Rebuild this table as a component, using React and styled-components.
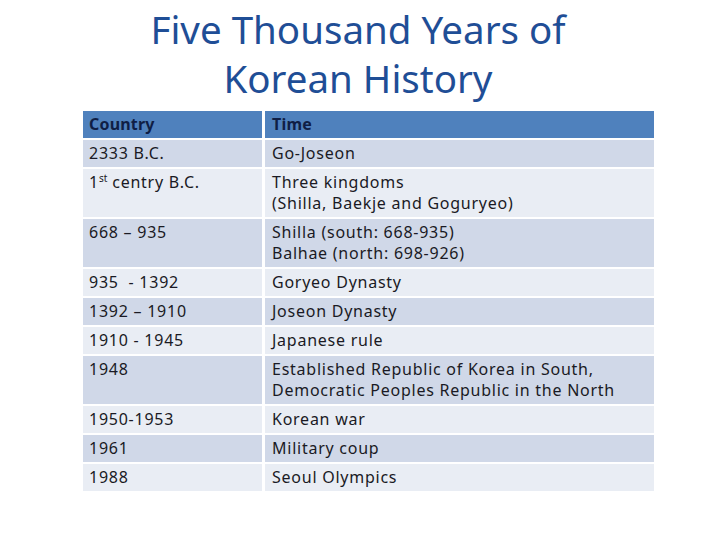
import React from "react";
import styled, { createGlobalStyle } from "styled-components";

const GlobalStyle = createGlobalStyle`
  html, body {
    margin: 0;
    padding: 0;
    background: #ffffff;
  }
  body {
    font-family: "Noto Sans", "Open Sans", sans-serif;
  }
`;

const Slide = styled.div`
  width: 720px;
  height: 540px;
  display: flex;
  flex-direction: column;
  align-items: center;
  background: #ffffff;
`;

const Title = styled.h1`
  margin: 5px 0 0 -4px;
  font-weight: 400;
  font-size: 38.5px;
  line-height: 49px;
  color: #1f4e96;
  text-align: center;
`;

const Table = styled.div`
  align-self: flex-start;
  margin: 8px 0 0 83px;
  width: 571px;
  display: grid;
  grid-template-columns: 179px 1fr;
  column-gap: 3px;
  row-gap: 2px;
`;

const Cell = styled.div`
  min-height: 27px;
  box-sizing: border-box;
  padding: 3px 7px 3px ${(p) => (p.$first ? "6px" : "7px")};
  font-size: 16px;
  line-height: 21px;
  letter-spacing: ${(p) => (p.$head ? "0.2px" : "0.75px")};
  color: ${(p) => (p.$head ? "#0f1e45" : "#1a1a24")};
  font-weight: ${(p) => (p.$head ? 700 : 400)};
  background: ${(p) =>
    p.$head ? "#4f81bd" : p.$dark ? "#d0d8e8" : "#e9edf4"};
  white-space: pre;
`;

const Sup = styled.sup`
  font-size: 10px;
  line-height: 0;
  letter-spacing: 0;
  vertical-align: 6px;
`;

const rows = [
  ["2333 B.C.", ["Go-Joseon"]],
  [
    <>
      1<Sup>st</Sup> centry B.C.
    </>,
    ["Three kingdoms", "(Shilla, Baekje and Goguryeo)"],
  ],
  ["668 – 935", ["Shilla (south: 668-935)", "Balhae (north: 698-926)"]],
  ["935  - 1392", ["Goryeo Dynasty"]],
  ["1392 – 1910", ["Joseon Dynasty"]],
  ["1910 - 1945", ["Japanese rule"]],
  [
    "1948",
    [
      "Established Republic of Korea in South,",
      "Democratic Peoples Republic in the North",
    ],
  ],
  ["1950-1953", ["Korean war"]],
  ["1961", ["Military coup"]],
  ["1988", ["Seoul Olympics"]],
];

export default function App() {
  return (
    <Slide>
      <GlobalStyle />
      <Title>
        Five Thousand Years of
        <br />
        Korean History
      </Title>
      <Table>
        <Cell $head $first>
          Country
        </Cell>
        <Cell $head>Time</Cell>
        {rows.map(([country, time], i) => (
          <React.Fragment key={i}>
            <Cell $first $dark={i % 2 === 0}>
              {country}
            </Cell>
            <Cell $dark={i % 2 === 0}>
              {time.map((line, j) => (
                <div key={j}>{line}</div>
              ))}
            </Cell>
          </React.Fragment>
        ))}
      </Table>
    </Slide>
  );
}
